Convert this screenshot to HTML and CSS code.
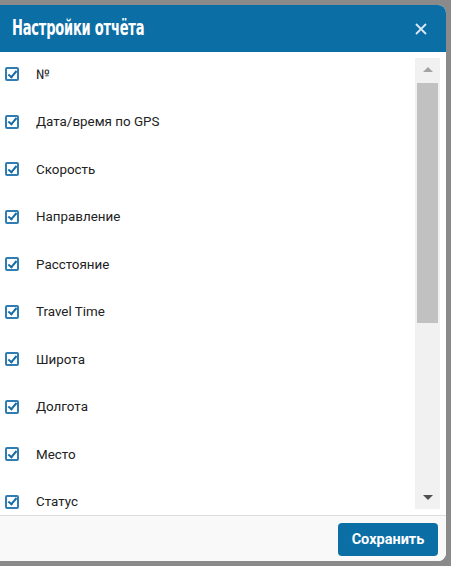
FILE: index.html
```html
<!DOCTYPE html>
<html lang="ru">
<head>
<meta charset="utf-8">
<link rel="stylesheet" href="styles.css">
</head>
<body>
<div class="dialog">
  <div class="header">
    <span class="title">Настройки отчёта</span>
    <svg class="close" width="12" height="12" viewBox="0 0 12 12"><path d="M1 1L11 11M11 1L1 11" stroke="#dce9f2" stroke-width="1.8" fill="none"/></svg>
  </div>
  <div class="body">
    <div class="list">
      <label class="row"><span class="cb"></span><span class="lbl">№</span></label>
      <label class="row"><span class="cb"></span><span class="lbl">Дата/время по GPS</span></label>
      <label class="row"><span class="cb"></span><span class="lbl">Скорость</span></label>
      <label class="row"><span class="cb"></span><span class="lbl">Направление</span></label>
      <label class="row"><span class="cb"></span><span class="lbl">Расстояние</span></label>
      <label class="row"><span class="cb"></span><span class="lbl">Travel Time</span></label>
      <label class="row"><span class="cb"></span><span class="lbl">Широта</span></label>
      <label class="row"><span class="cb"></span><span class="lbl">Долгота</span></label>
      <label class="row"><span class="cb"></span><span class="lbl">Место</span></label>
      <label class="row"><span class="cb"></span><span class="lbl">Статус</span></label>
    </div>
    <div class="scrollbar">
      <div class="sb-btn"><span class="tri-up"></span></div>
      <div class="sb-track"><div class="sb-thumb"></div></div>
      <div class="sb-btn"><span class="tri-down"></span></div>
    </div>
  </div>
  <div class="footer">
    <button class="save">Сохранить</button>
  </div>
</div>
</body>
</html>
```
FILE: styles.css
```css
html, body {
  margin: 0;
  padding: 0;
  background: #8a8a8a;
  width: 451px;
  height: 566px;
  overflow: hidden;
}
.dialog {
  margin: 5px 0 0 -8px;
  width: 454px;
  height: 556px;
  background: #fff;
  border-radius: 8px;
  overflow: hidden;
  display: flex;
  flex-direction: column;
  font-family: Roboto, "Liberation Sans", sans-serif;
}
.header {
  height: 47px;
  flex: none;
  background: #0b6ea5;
  display: flex;
  align-items: center;
  justify-content: space-between;
  padding: 0 19px 0 20px;
}
.title {
  display: inline-block;
  font-family: "DejaVu Sans Condensed", "DejaVu Sans", sans-serif;
  font-weight: bold;
  font-size: 21px;
  color: #fff;
  transform: scaleX(0.69);
  transform-origin: left center;
  letter-spacing: -0.3px;
  margin-top: -1px;
}
.close {
  display: block;
}
.body {
  flex: 1;
  display: flex;
  padding: 6px 6px 6px 0;
  min-height: 0;
}
.list {
  flex: 1;
  overflow: hidden;
  display: flex;
  flex-direction: column;
  gap: 15.55px;
  padding-left: 13px;
}
.row {
  flex: none;
  height: 32px;
  display: flex;
  align-items: center;
}
.cb {
  width: 10px;
  height: 10px;
  border: 2px solid #2f7db2;
  border-radius: 2px;
  background: #fff;
  position: relative;
  flex: none;
}
.cb::after {
  content: "";
  position: absolute;
  left: 2.5px;
  top: -0.5px;
  width: 3px;
  height: 7px;
  border: solid #176ca6;
  border-width: 0 2.4px 2.4px 0;
  transform: rotate(40deg);
}
.lbl {
  margin-left: 17px;
  font-size: 13.4px;
  color: #222;
}
.scrollbar {
  width: 25px;
  flex: none;
  background: #f1f1f1;
  display: flex;
  flex-direction: column;
}
.sb-btn {
  height: 25px;
  display: flex;
  align-items: center;
  justify-content: center;
  flex: none;
}
.tri-up {
  width: 0; height: 0;
  border-left: 5px solid transparent;
  border-right: 5px solid transparent;
  border-bottom: 5px solid #a3a3a3;
  margin-top: -2px;
}
.tri-down {
  width: 0; height: 0;
  border-left: 5px solid transparent;
  border-right: 5px solid transparent;
  border-top: 5px solid #505050;
  margin-top: 1px;
}
.sb-track {
  flex: 1;
  padding: 0 2px;
}
.sb-thumb {
  height: 240px;
  background: #c1c1c1;
}
.footer {
  flex: none;
  border-top: 1px solid #dedede;
  background: #f9f9f9;
  display: flex;
  justify-content: flex-end;
  align-items: flex-start;
  padding: 7px 8px 0 0;
  box-sizing: border-box;
  height: 46px;
}
.save {
  width: 100px;
  height: 33px;
  background: #0b6ea5;
  color: #fff;
  border: none;
  border-radius: 4px;
  font-family: Roboto, "Liberation Sans", sans-serif;
  font-weight: bold;
  font-size: 14.5px;
  padding: 0;
}
```
